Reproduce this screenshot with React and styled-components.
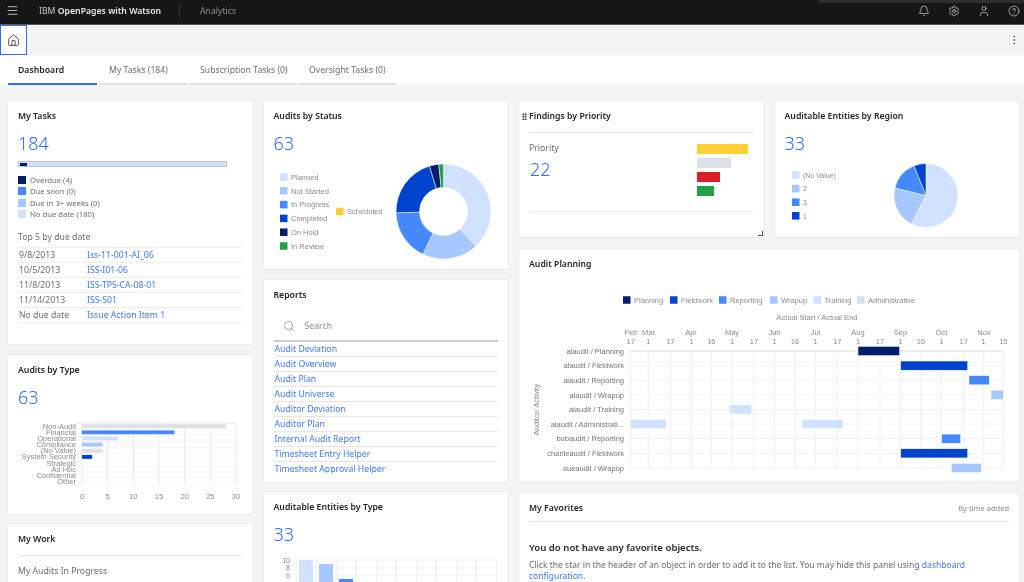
import React from 'react';
import styled, { createGlobalStyle } from 'styled-components';
import { Bell, CircleHelp, House, Menu, MoreVertical, Search, Settings, User } from 'lucide-react';

const NAVY = '#001d6c';
const BLUE70 = '#0043ce';
const BLUE50 = '#4589ff';
const BLUE30 = '#a6c8ff';
const BLUE20 = '#d0e2ff';
const GRAY = '#dde1e6';
const GREEN = '#24a148';
const YELLOW = '#ffcf33';
const RED = '#da1e28';
const LINK = '#3d7bf7';

const GlobalStyle = createGlobalStyle`
  html, body {
    margin: 0;
    height: 582px;
    overflow: hidden;
    background: #f4f4f4;
    font-family: "Noto Sans", "Open Sans", sans-serif;
    color: #525252;
  }
  * { box-sizing: border-box; }
`;

const Page = styled.div`
  height: 582px;
  overflow: hidden;
  filter: blur(0.3px);
`;

const Header = styled.header`
  height: 25px;
  background: #161616;
  border-bottom: 1px solid #5a5a5a;
  display: flex;
  align-items: center;
  position: relative;
  color: #e8e8e8;
  padding-bottom: 3px;
`;

const SearchPeek = styled.div`
  position: absolute;
  top: 0;
  right: 0;
  width: 206px;
  height: 3px;
  background: #2e2e2e;
  border-bottom-left-radius: 4px;
`;

const MenuButton = styled.div`
  width: 39px;
  padding-left: 6px;
  display: flex;
`;

const Brand = styled.div`
  width: 140px;
  font-size: 8.7px;
  font-weight: 600;
  color: #e8e8e8;
  white-space: nowrap;
  span { font-weight: 400; color: #c6c6c6; }
`;

const HeaderDivider = styled.div`
  width: 1px;
  height: 15px;
  background: #393939;
`;

const AppName = styled.div`
  margin-left: 20px;
  font-size: 8.7px;
  color: #8d8d8d;
`;

const HeaderIcons = styled.div`
  margin-left: auto;
  display: flex;
  gap: 18px;
  padding-right: 4px;
`;

const Toolbar = styled.div`
  height: 30px;
  background: #f4f4f4;
  display: flex;
  align-items: center;
  justify-content: space-between;
  padding-right: 4px;
`;

const HomeTab = styled.div`
  width: 27px;
  height: 30px;
  background: #fff;
  border: 1px solid #2f6ff0;
  display: flex;
  align-items: center;
  justify-content: center;
  color: #262626;
`;

const Tabs = styled.nav`
  height: 30px;
  background: #fff;
  display: flex;
  gap: 2px;
  padding-left: 8px;
`;

const Tab = styled.div`
  width: ${p => p.$w}px;
  padding-left: 10px;
  font-size: 8.7px;
  line-height: 31px;
  height: 30px;
  white-space: nowrap;
  font-weight: ${p => (p.$active ? 600 : 400)};
  color: ${p => (p.$active ? '#262626' : '#6f6f6f')};
  border-bottom: 2px solid ${p => (p.$active ? '#2f6ff0' : '#e0e0e0')};
`;

const Board = styled.main`
  display: grid;
  grid-template-columns: repeat(4, 1fr);
  gap: 11px;
  padding: 16px 5px 0 8px;
`;

const Column = styled.div`
  display: flex;
  flex-direction: column;
  gap: 10.5px;
`;

const WideColumn = styled.div`
  grid-column: span 2;
  display: grid;
  grid-template-columns: 1fr 1fr;
  gap: 12px 11px;
  align-content: start;
`;

const Card = styled.section`
  height: ${p => p.$h}px;
  grid-column: ${p => (p.$wide ? 'span 2' : 'auto')};
  background: #fff;
  box-shadow: 0 0 0 1px #ececec;
  padding: 9px 10px;
  position: relative;
  overflow: hidden;
`;

const TitleRow = styled.div`
  display: flex;
  justify-content: space-between;
  align-items: center;
  height: 12px;
`;

const Title = styled.h2`
  margin: 0;
  font-size: 8.7px;
  line-height: 12px;
  font-weight: 600;
  color: #262626;
  white-space: nowrap;
`;

const SideNote = styled.span`
  font-size: 7.5px;
  color: #8d8d8d;
`;

const BigNumber = styled.div`
  margin-top: 9px;
  font-size: 18px;
  line-height: 24px;
  font-weight: 300;
  color: #2f6ff0;
`;

const TaskBar = styled.div`
  margin-top: 6px;
  width: 209px;
  height: 6px;
  background: ${BLUE20};
  border: 1px solid #c4c8ce;
  display: flex;
  align-items: center;
  padding-left: 1px;
`;

const TaskBarFill = styled.div`
  height: 3px;
  background: ${NAVY};
`;

const TaskLegend = styled.ul`
  list-style: none;
  margin: 7.5px 0 0;
  padding: 0;
  display: grid;
  grid-auto-rows: 11.3px;
`;

const TaskLegendItem = styled.li`
  display: flex;
  align-items: center;
  gap: 4px;
  font-size: 7.7px;
  color: #6f6f6f;
  &::before {
    content: '';
    width: 8px;
    height: 8px;
    background: ${p => p.$color};
  }
`;

const Caption = styled.div`
  margin-top: ${p => p.$mt || 11.5}px;
  font-size: 8.7px;
  line-height: 12px;
  color: #6f6f6f;
`;

const DueTable = styled.div`
  margin-top: 4px;
  border-top: 1px solid #eeeeee;
`;

const DueRow = styled.div`
  display: grid;
  grid-template-columns: 68px 1fr;
  height: 15px;
  padding-left: 1px;
  font-size: 8.7px;
  line-height: 14px;
  color: #6f6f6f;
  border-bottom: 1px solid #eeeeee;
`;

const Link = styled.a`
  color: ${LINK};
  text-decoration: none;
`;

const Rule = styled.hr`
  margin: ${p => p.$m || '10px 0 0'};
  border: 0;
  border-top: 1px solid #e6e6e6;
`;

const SearchBox = styled.div`
  margin-top: 12px;
  height: 29px;
  display: flex;
  align-items: center;
  gap: 10px;
  padding-left: 9px;
  border-bottom: 2px solid #cccccc;
  font-size: 8.7px;
  color: #8d8d8d;
`;

const ReportList = styled.div`
  height: 131px;
  overflow: hidden;
`;

const ReportRow = styled.div`
  height: 15px;
  padding-left: 1px;
  font-size: 8.7px;
  line-height: 14px;
  border-bottom: 1px solid #e6e6e6;
`;

const Chart = styled.svg`
  display: block;
  position: absolute;
  left: 0;
  top: 0;
  text { font-family: "Liberation Sans", Arial, sans-serif; }
`;

const PriorityBody = styled.div`
  height: 79px;
  padding-top: 9px;
  border-bottom: 1px solid #eeeeee;
  font-size: 8.7px;
  line-height: 12px;
  color: #6f6f6f;
`;

const PriorityNumber = styled(BigNumber)`
  margin: 3px 0 0 1px;
`;

const Grip = styled.span`
  position: absolute;
  left: 3px;
  top: 12px;
  width: 5px;
  height: 7px;
  background-image: radial-gradient(circle, #262626 0.8px, transparent 0.9px);
  background-size: 2.5px 2.5px;
`;

const ResizeCorner = styled.span`
  position: absolute;
  right: 1px;
  bottom: 1px;
  width: 5px;
  height: 5px;
  border-right: 1px solid #525252;
  border-bottom: 1px solid #525252;
`;

const EmptyTitle = styled.div`
  margin-top: 19px;
  font-size: 9.6px;
  line-height: 13px;
  font-weight: 600;
  color: #262626;
`;

const EmptyText = styled.p`
  margin: 5.5px 0 0;
  font-size: 8.55px;
  line-height: 11px;
  color: #6f6f6f;
`;

const polar = (cx, cy, r, deg) => {
  const a = ((deg - 90) * Math.PI) / 180;
  return [cx + r * Math.cos(a), cy + r * Math.sin(a)];
};

// slices of a pie or, with an inner radius, a donut
function Slices({ cx, cy, r, inner = 0, data }) {
  const total = data.reduce((sum, d) => sum + d.value, 0);
  let start = 0;
  return data.map(d => {
    const end = start + (d.value / total) * 360;
    const large = end - start > 180 ? 1 : 0;
    const [x1, y1] = polar(cx, cy, r, start);
    const [x2, y2] = polar(cx, cy, r, end);
    const [x3, y3] = polar(cx, cy, inner, end);
    const [x4, y4] = polar(cx, cy, inner, start);
    const path = `M${x1} ${y1}A${r} ${r} 0 ${large} 1 ${x2} ${y2}L${x3} ${y3}A${inner} ${inner} 0 ${large} 0 ${x4} ${y4}Z`;
    start = end;
    return <path key={d.label} d={path} fill={d.color} stroke="#fff" strokeWidth="0.5" />;
  });
}

function LegendKey({ x, y, color, label, size = 7.5, fill = '#8d8d8d' }) {
  return (
    <g>
      <rect x={x} y={y - 3.75} width="7.5" height="7.5" fill={color} />
      <text x={x + 11} y={y + 2.7} fontSize={size} fill={fill}>{label}</text>
    </g>
  );
}

const STATUS = [
  { label: 'Planned', value: 24, color: BLUE20 },
  { label: 'Not Started', value: 12, color: BLUE30 },
  { label: 'In Progress', value: 11, color: BLUE50 },
  { label: 'Completed', value: 13, color: BLUE70 },
  { label: 'On Hold', value: 2, color: NAVY },
  { label: 'In Review', value: 1, color: GREEN },
];

function StatusChart() {
  return (
    <Chart width="244" height="168" viewBox="264 101 244 168">
      {STATUS.map((s, i) => (
        <LegendKey key={s.label} x={280} y={177 + i * 13.8} color={s.color} label={s.label} />
      ))}
      <LegendKey x={336} y={211.5} color={YELLOW} label="Scheduled" />
      <Slices cx={443.5} cy={211.5} r={47.5} inner={24} data={STATUS} />
    </Chart>
  );
}

const REGIONS = [
  { label: '(No Value)', value: 19, color: BLUE20 },
  { label: '2', value: 7, color: BLUE30 },
  { label: '3', value: 5, color: BLUE50 },
  { label: '1', value: 2, color: BLUE70 },
];

function RegionChart() {
  return (
    <Chart width="245" height="136" viewBox="774 101 245 136">
      {REGIONS.map((s, i) => (
        <LegendKey key={s.label} x={791} y={175 + i * 13.6} color={s.color} label={s.label} size={7} />
      ))}
      <Slices cx={925} cy={195.5} r={32} data={REGIONS} />
    </Chart>
  );
}

const PRIORITIES = [
  { y: 144, w: 51, color: YELLOW },
  { y: 158, w: 34, color: GRAY },
  { y: 172, w: 23, color: RED },
  { y: 186, w: 17, color: GREEN },
];

function PriorityChart() {
  return (
    <Chart width="244" height="136" viewBox="519 101 244 136">
      {PRIORITIES.map(p => (
        <rect key={p.y} x={697} y={p.y} width={p.w} height={10} fill={p.color} />
      ))}
    </Chart>
  );
}

const AUDIT_TYPES = [
  ['Non-Audit', 28, GRAY],
  ['Financial', 18, BLUE50],
  ['Operational', 7, BLUE20],
  ['Compliance', 4, BLUE30],
  ['(No Value)', 4, GRAY],
  ['System Security', 2, BLUE70],
  ['Strategic', 0, GRAY],
  ['Ad Hoc', 0, GRAY],
  ['Confidential', 0, GRAY],
  ['Other', 0, GRAY],
];

function AuditTypeChart() {
  const scale = 5.133;
  const rowH = 6.15;
  return (
    <Chart width="244" height="159" viewBox="8 354 244 159">
      {[0, 5, 10, 15, 20, 25, 30].map(t => (
        <g key={t}>
          <line x1={82 + t * scale} x2={82 + t * scale} y1={422} y2={484} stroke="#e0e0e0" strokeWidth="0.7" />
          <text x={82 + t * scale} y={497.5} fontSize="7.5" fill="#8d8d8d" textAnchor="middle">{t}</text>
        </g>
      ))}
      <rect x={76} y={421.5} width={160} height={1} fill="#e8e8e8" />
      {AUDIT_TYPES.map(([label, value, color], i) => {
        const y = 422 + i * rowH;
        return (
          <g key={label}>
            <line x1={82} x2={236} y1={y + rowH} y2={y + rowH} stroke="#eeeeee" strokeWidth="0.6" />
            <rect x={82} y={y + 1.2} width={value * scale} height={3.9} fill={color} />
            <text x={76} y={y + 5.6} fontSize="7.5" fill="#8d8d8d" textAnchor="end">{label}</text>
          </g>
        );
      })}
    </Chart>
  );
}

function EntityTypeChart() {
  const xs = Array.from({ length: 11 }, (_, i) => 296.5 + i * 20);
  return (
    <Chart width="244" height="92" viewBox="264 492 244 92">
      {xs.map(x => <line key={x} x1={x} x2={x} y1={560} y2={583} stroke="#eeeeee" strokeWidth="0.7" />)}
      {[['10', 560], ['8', 567.7], ['6', 575.4]].map(([label, y]) => (
        <g key={label}>
          <line x1={296} x2={496} y1={y} y2={y} stroke="#eeeeee" strokeWidth="0.7" />
          <text x={290} y={y + 2.7} fontSize="7" fill="#8d8d8d" textAnchor="end">{label}</text>
        </g>
      ))}
      <rect x={299} y={560} width={14} height={23} fill={BLUE20} />
      <rect x={319} y={564} width={14} height={19} fill={BLUE30} />
      <rect x={339} y={579} width={14} height={4} fill={BLUE50} />
    </Chart>
  );
}

const GANTT_KEYS = [
  [623, 'Planning', NAVY],
  [670, 'Fieldwork', BLUE70],
  [719, 'Reporting', BLUE50],
  [770, 'Wrapup', BLUE30],
  [813.5, 'Training', BLUE20],
  [857, 'Administrative', BLUE20],
];
const MONTHS = [
  ['Feb', 631], ['Mar', 648.5], ['Apr', 691], ['May', 732], ['Jun', 774.5],
  ['Jul', 815.5], ['Aug', 858], ['Sep', 900.5], ['Oct', 941.5], ['Nov', 984],
];
const DAYS = [
  [17, 630.7], [1, 648.3], [17, 670.3], [1, 691.3], [16, 711.3], [1, 732], [17, 754], [1, 774.3], [16, 795],
  [1, 815.3], [17, 837.3], [1, 858], [17, 880], [1, 900.7], [16, 921], [1, 941.3], [17, 963.7], [1, 983.7], [15, 1003.3],
];
const GANTT_ROWS = [
  'alaudit / Planning', 'alaudit / Fieldwork', 'alaudit / Reporting', 'alaudit / Wrapup', 'alaudit / Training',
  'alaudit / Administrati...', 'bobaudit / Reporting', 'charlieaudit / Fieldwork', 'sueaudit / Wrapup',
];
const GANTT_BARS = [
  [0, 858, 899.5, NAVY],
  [1, 900.7, 967.7, BLUE70],
  [2, 969, 989.3, BLUE50],
  [3, 991, 1003.3, BLUE30],
  [4, 729.3, 751.3, BLUE20],
  [5, 630.7, 666.3, BLUE20],
  [5, 802, 843, BLUE20],
  [6, 941.7, 960.7, BLUE50],
  [7, 900.7, 967.7, BLUE70],
  [8, 951.3, 981.3, BLUE30],
];
const rowY = i => 351 + i * 14.62;

function GanttChart() {
  return (
    <Chart width="500" height="231" viewBox="519 249 500 231">
      {GANTT_KEYS.map(([x, label, color]) => (
        <LegendKey key={label} x={x} y={300} color={color} label={label} size={7.5} />
      ))}
      <text x={817} y={319.5} fontSize="7.5" fill="#8d8d8d" textAnchor="middle">Actual Start / Actual End</text>
      {MONTHS.map(([label, x]) => (
        <text key={label} x={x} y={335} fontSize="7.5" fill="#8d8d8d" textAnchor="middle">{label}</text>
      ))}
      {DAYS.map(([label, x]) => (
        <g key={x}>
          <line x1={x} x2={x} y1={351} y2={468} stroke="#e8e8e8" strokeWidth="0.7" />
          <text x={x} y={343.5} fontSize="7.5" fill="#8d8d8d" textAnchor="middle">{label}</text>
        </g>
      ))}
      <text transform="translate(538.5 409.5) rotate(-90)" fontSize="7.5" fill="#8d8d8d" textAnchor="middle">Auditor/ Activity</text>
      {GANTT_ROWS.map((label, i) => (
        <g key={label}>
          <line x1={629} x2={1003.3} y1={rowY(i)} y2={rowY(i)} stroke={i === 0 ? '#d0d0d0' : '#eeeeee'} strokeWidth="0.7" />
          <text x={624} y={rowY(i) + 2.7} fontSize="7.5" fill="#757575" textAnchor="end">{label}</text>
        </g>
      ))}
      {GANTT_BARS.map(([row, x1, x2, color]) => (
        <rect key={`${row}-${x1}`} x={x1} y={rowY(row) - 4.6} width={x2 - x1} height={9.2} fill={color} stroke="#fff" strokeWidth="0.5" />
      ))}
    </Chart>
  );
}

const DUE = [
  ['9/8/2013', 'Iss-11-001-AI_06'],
  ['10/5/2013', 'ISS-I01-06'],
  ['11/8/2013', 'ISS-TPS-CA-08-01'],
  ['11/14/2013', 'ISS-S01'],
  ['No due date', 'Issue Action Item 1'],
];
const REPORTS = [
  'Audit Deviation', 'Audit Overview', 'Audit Plan', 'Audit Universe', 'Auditor Deviation',
  'Auditor Plan', 'Internal Audit Report', 'Timesheet Entry Helper', 'Timesheet Approval Helper',
];

export default function App() {
  return (
    <Page>
      <GlobalStyle />
      <Header>
        <SearchPeek />
        <MenuButton><Menu size={13} strokeWidth={1.4} /></MenuButton>
        <Brand><span>IBM</span> OpenPages with Watson</Brand>
        <HeaderDivider />
        <AppName>Analytics</AppName>
        <HeaderIcons>
          <Bell size={12} strokeWidth={1.3} />
          <Settings size={12} strokeWidth={1.3} />
          <User size={12} strokeWidth={1.3} />
          <CircleHelp size={12} strokeWidth={1.3} />
        </HeaderIcons>
      </Header>
      <Toolbar>
        <HomeTab><House size={13} strokeWidth={1.4} /></HomeTab>
        <MoreVertical size={12} strokeWidth={1.5} color="#525252" />
      </Toolbar>
      <Tabs>
        <Tab $w={89} $active>Dashboard</Tab>
        <Tab $w={89}>My Tasks (184)</Tab>
        <Tab $w={107}>Subscription Tasks (0)</Tab>
        <Tab $w={97}>Oversight Tasks (0)</Tab>
      </Tabs>
      <Board>
        <Column>
          <Card $h={243}>
            <Title>My Tasks</Title>
            <BigNumber>184</BigNumber>
            <TaskBar><TaskBarFill style={{ width: `${(4 / 184) * 100 + 1}%` }} /></TaskBar>
            <TaskLegend>
              <TaskLegendItem $color={NAVY}>Overdue (4)</TaskLegendItem>
              <TaskLegendItem $color={BLUE50}>Due soon (0)</TaskLegendItem>
              <TaskLegendItem $color={BLUE30}>Due in 3+ weeks (0)</TaskLegendItem>
              <TaskLegendItem $color={BLUE20}>No due date (180)</TaskLegendItem>
            </TaskLegend>
            <Caption>Top 5 by due date</Caption>
            <DueTable>
              {DUE.map(([date, name]) => (
                <DueRow key={name}><span>{date}</span><Link>{name}</Link></DueRow>
              ))}
            </DueTable>
          </Card>
          <Card $h={159}>
            <Title>Audits by Type</Title>
            <BigNumber>63</BigNumber>
            <AuditTypeChart />
          </Card>
          <Card $h={80}>
            <Title>My Work</Title>
            <Rule />
            <Caption $mt={9}>My Audits In Progress</Caption>
          </Card>
        </Column>
        <Column>
          <Card $h={168}>
            <Title>Audits by Status</Title>
            <BigNumber>63</BigNumber>
            <StatusChart />
          </Card>
          <Card $h={202}>
            <Title>Reports</Title>
            <SearchBox><Search size={12} strokeWidth={1.2} color="#6f6f6f" />Search</SearchBox>
            <ReportList>
              {REPORTS.map(name => <ReportRow key={name}><Link>{name}</Link></ReportRow>)}
            </ReportList>
          </Card>
          <Card $h={100}>
            <Title>Auditable Entities by Type</Title>
            <BigNumber>33</BigNumber>
            <EntityTypeChart />
          </Card>
        </Column>
        <WideColumn>
          <Card $h={136}>
            <Grip />
            <Title>Findings by Priority</Title>
            <Rule $m="10px 0 0" />
            <PriorityBody>
              Priority
              <PriorityNumber>22</PriorityNumber>
            </PriorityBody>
            <PriorityChart />
            <ResizeCorner />
          </Card>
          <Card $h={136}>
            <Title>Auditable Entities by Region</Title>
            <BigNumber>33</BigNumber>
            <RegionChart />
          </Card>
          <Card $h={232} $wide>
            <Title>Audit Planning</Title>
            <GanttChart />
          </Card>
          <Card $h={100} $wide>
            <TitleRow>
              <Title>My Favorites</Title>
              <SideNote>By time added</SideNote>
            </TitleRow>
            <Rule $m="7px 0 0" />
            <EmptyTitle>You do not have any favorite objects.</EmptyTitle>
            <EmptyText>
              Click the star in the header of an object in order to add it to the list. You may hide this panel using{' '}
              <Link>dashboard configuration</Link>.
            </EmptyText>
          </Card>
        </WideColumn>
      </Board>
    </Page>
  );
}
